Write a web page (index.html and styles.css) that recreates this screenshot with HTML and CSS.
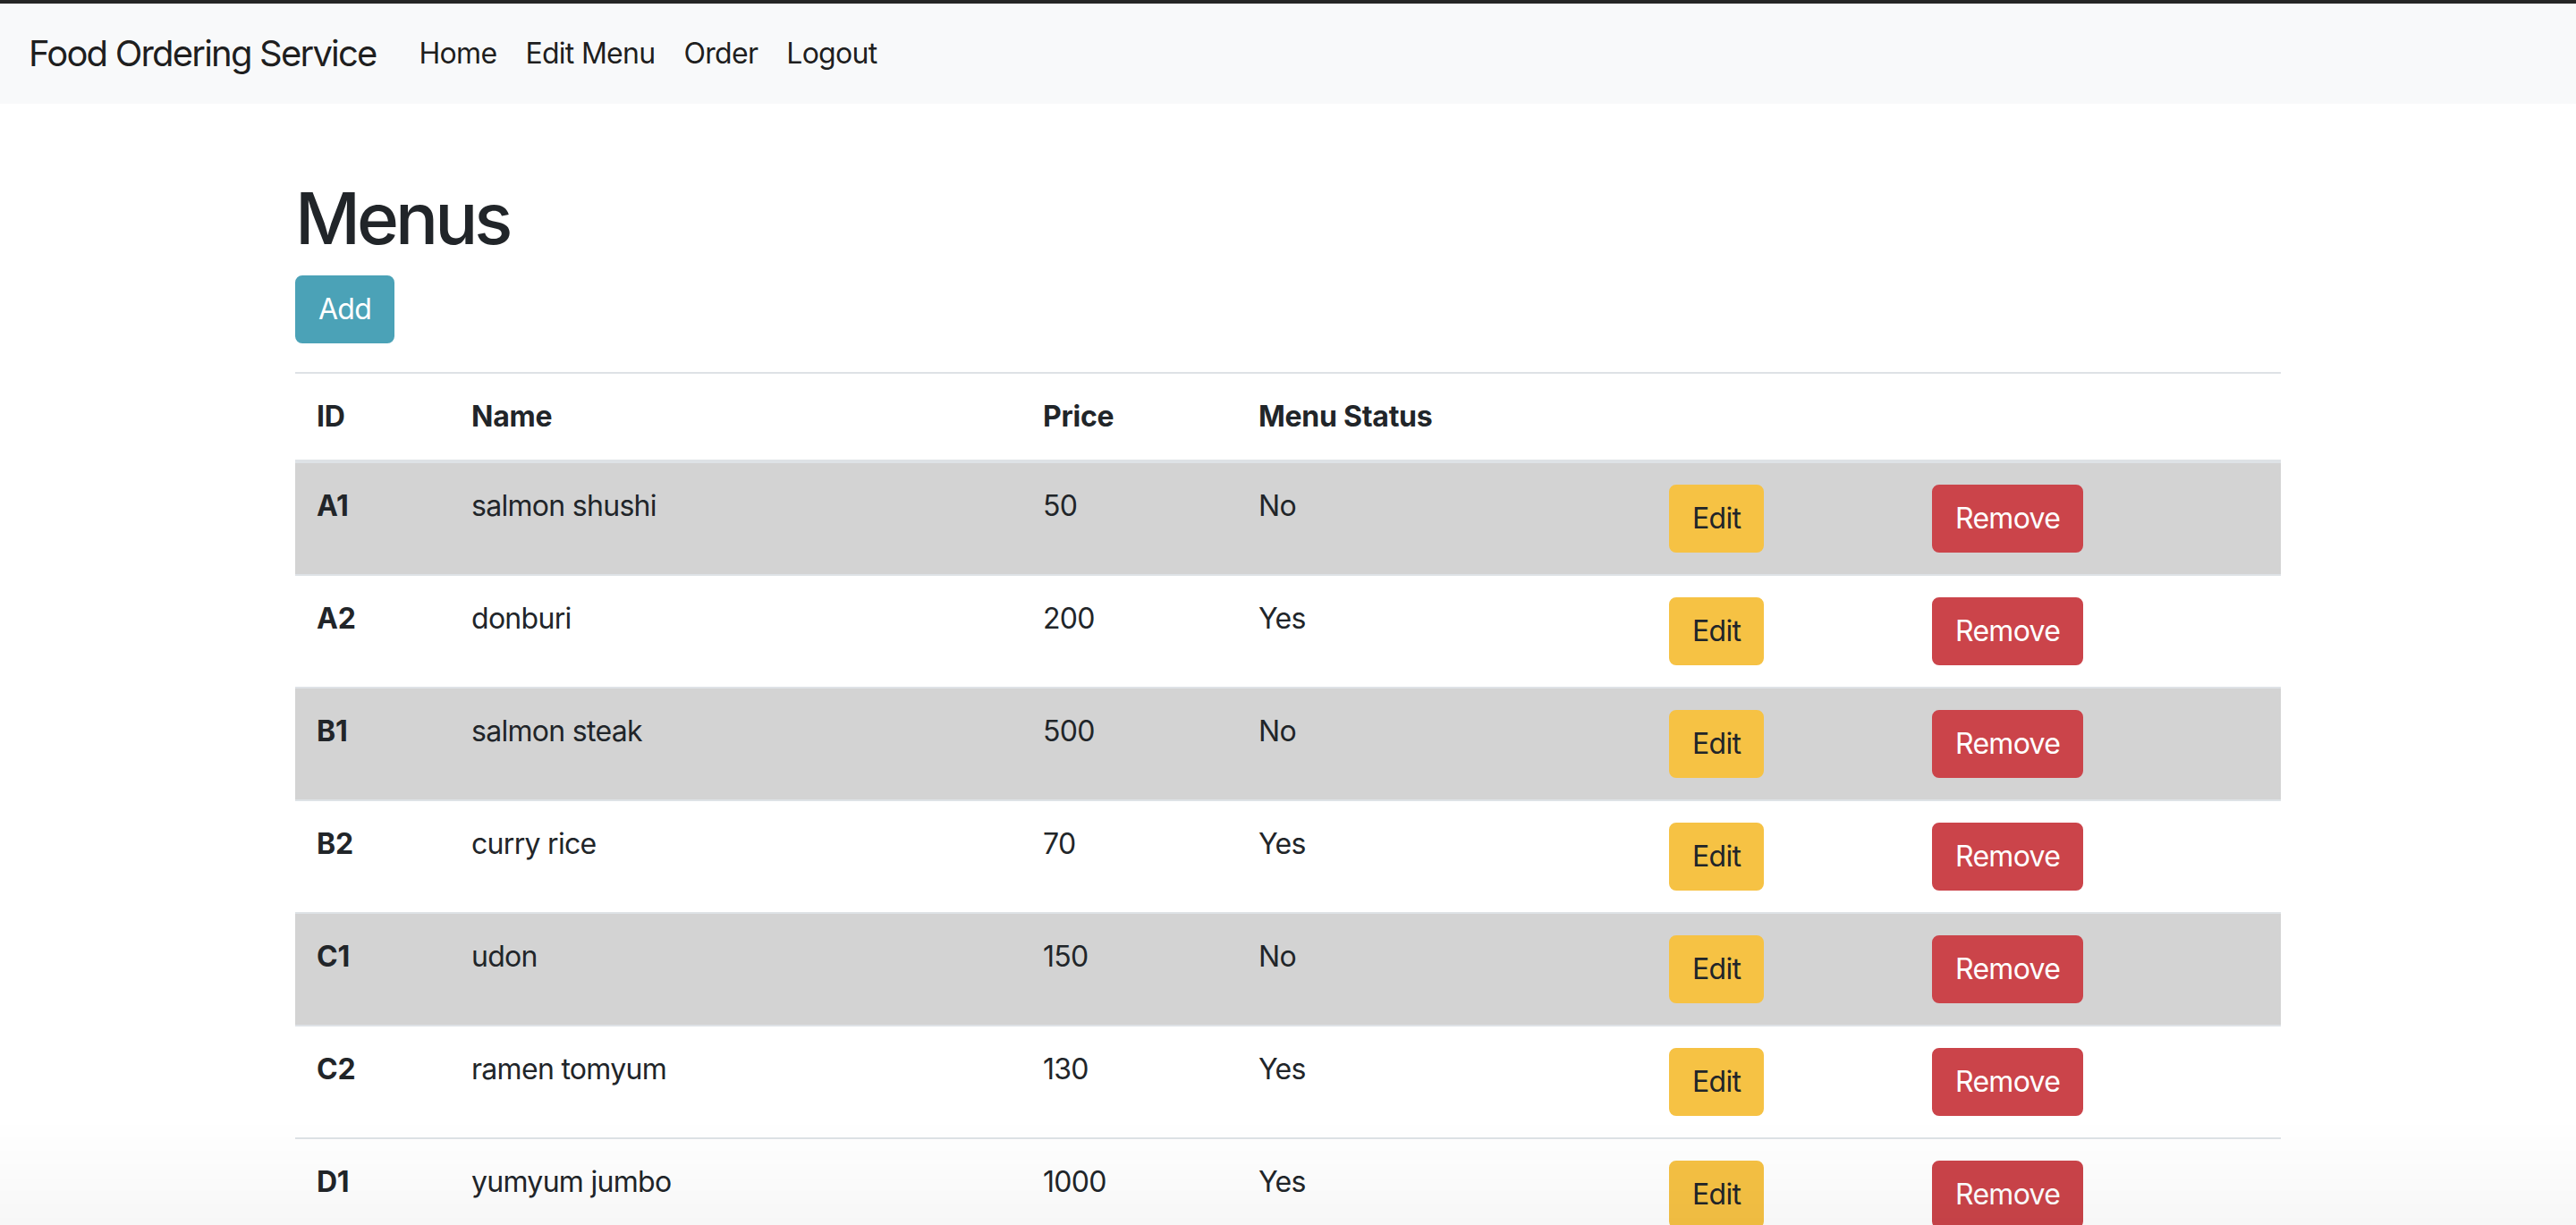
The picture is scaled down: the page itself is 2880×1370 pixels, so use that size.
FILE: index.html
```html
<!DOCTYPE html>
<html lang="en">
<head>
<meta charset="utf-8">
<title>Food Ordering Service</title>
<link rel="stylesheet" href="styles.css">
</head>
<body>
<div class="topbar"></div>
<nav class="navbar">
  <a class="brand" href="#">Food Ordering Service</a>
  <ul class="nav">
    <li><a class="nav-link" href="#">Home</a></li>
    <li><a class="nav-link" href="#">Edit Menu</a></li>
    <li><a class="nav-link" href="#">Order</a></li>
    <li><a class="nav-link" href="#">Logout</a></li>
  </ul>
</nav>
<main class="container">
  <h1 class="title">Menus</h1>
  <div class="actions"><button class="btn btn-info">Add</button></div>
  <table class="table">
    <colgroup>
      <col class="c-id"><col class="c-name"><col class="c-price"><col class="c-status"><col class="c-edit"><col class="c-remove">
    </colgroup>
    <thead>
      <tr><th>ID</th><th>Name</th><th>Price</th><th>Menu Status</th><th></th><th></th></tr>
    </thead>
    <tbody>
      <tr class="row-off"><th>A1</th><td>salmon shushi</td><td>50</td><td>No</td><td><button class="btn btn-warning">Edit</button></td><td><button class="btn btn-danger">Remove</button></td></tr>
      <tr><th>A2</th><td>donburi</td><td>200</td><td>Yes</td><td><button class="btn btn-warning">Edit</button></td><td><button class="btn btn-danger">Remove</button></td></tr>
      <tr class="row-off"><th>B1</th><td>salmon steak</td><td>500</td><td>No</td><td><button class="btn btn-warning">Edit</button></td><td><button class="btn btn-danger">Remove</button></td></tr>
      <tr><th>B2</th><td>curry rice</td><td>70</td><td>Yes</td><td><button class="btn btn-warning">Edit</button></td><td><button class="btn btn-danger">Remove</button></td></tr>
      <tr class="row-off"><th>C1</th><td>udon</td><td>150</td><td>No</td><td><button class="btn btn-warning">Edit</button></td><td><button class="btn btn-danger">Remove</button></td></tr>
      <tr><th>C2</th><td>ramen tomyum</td><td>130</td><td>Yes</td><td><button class="btn btn-warning">Edit</button></td><td><button class="btn btn-danger">Remove</button></td></tr>
      <tr><th>D1</th><td>yumyum jumbo</td><td>1000</td><td>Yes</td><td><button class="btn btn-warning">Edit</button></td><td><button class="btn btn-danger">Remove</button></td></tr>
    </tbody>
  </table>
</main>
<div class="bottom-fade"></div>
</body>
</html>
```
FILE: styles.css
```css
html, body {
  margin: 0;
  padding: 0;
}
body {
  font-family: Inter, "Liberation Sans", sans-serif;
  font-size: 32px;
  line-height: 48px;
  letter-spacing: -0.022em;
  color: #212529;
  background: #fff;
}
.topbar {
  height: 4px;
  background: #262626;
}
.navbar {
  display: flex;
  align-items: center;
  height: 112px;
  box-sizing: border-box;
  padding: 16px 32px;
  background: #f8f9fa;
}
.brand {
  font-size: 40px;
  line-height: 60px;
  letter-spacing: -0.045em;
  padding: 10px 0;
  margin-right: 32px;
  color: rgba(0,0,0,.9);
  text-decoration: none;
  white-space: nowrap;
}
.nav {
  display: flex;
  list-style: none;
  margin: 0;
  padding: 0;
}
.nav-link {
  display: block;
  padding: 16px 16px;
  font-size: 32px;
  line-height: 48px;
  color: rgba(0,0,0,.9);
  text-decoration: none;
}
.container {
  width: 2220px;
  margin: 0 auto;
  padding-top: 80px;
}
.title {
  margin: 0 0 16px;
  font-size: 80px;
  line-height: 96px;
  font-weight: 500;
  letter-spacing: -0.05em;
  color: #212529;
}
.actions {
  margin-bottom: 32px;
}
.btn {
  display: inline-block;
  font-family: inherit;
  font-size: 32px;
  line-height: 48px;
  letter-spacing: -0.022em;
  padding: 12px 24px;
  border: 2px solid transparent;
  border-radius: 8px;
  cursor: pointer;
}
.btn-info {
  background: #4ba2b7;
  border-color: #4ba2b7;
  color: #fff;
}
.btn-warning {
  background: #f6c244;
  border-color: #f6c244;
  color: #212529;
}
.btn-danger {
  background: #cb444a;
  border-color: #cb444a;
  color: #fff;
}
.table {
  width: 100%;
  border-collapse: collapse;
  table-layout: fixed;
  margin-bottom: 32px;
}
.c-id { width: 173px; }
.c-name { width: 639px; }
.c-price { width: 241px; }
.c-status { width: 459px; }
.c-edit { width: 294px; }
.c-remove { width: 414px; }
.table th, .table td {
  padding: 24px;
  border-top: 2px solid #dee2e6;
  vertical-align: top;
  text-align: left;
  font-size: 32px;
  line-height: 48px;
}
.table th {
  font-weight: 700;
  letter-spacing: -0.008em;
}
.table thead th {
  border-bottom: 4px solid #dee2e6;
}
.table tbody tr.row-off {
  background: #d3d3d3;
}
.bottom-fade {
  position: fixed;
  left: 0;
  right: 0;
  bottom: 0;
  height: 120px;
  background: linear-gradient(to bottom, rgba(0,0,0,0), rgba(0,0,0,.03));
  pointer-events: none;
}
```
